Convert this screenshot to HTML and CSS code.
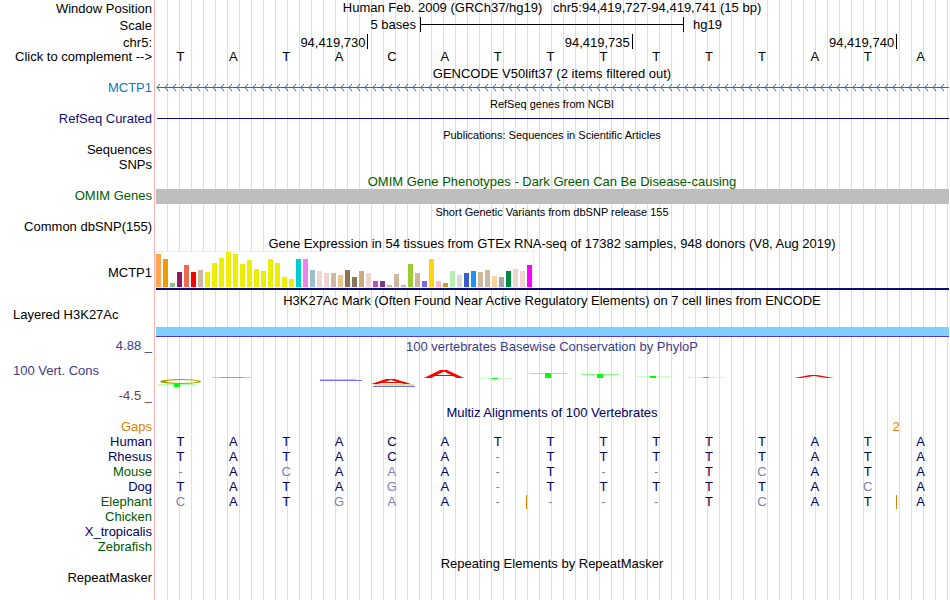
FILE: index.html
```
<!DOCTYPE html>
<html lang="en">
<head>
<meta charset="utf-8">
<title>Genome Browser</title>
<link rel="stylesheet" href="styles.css">
</head>
<body>
<main class="browser" id="browser">
  <section>
    <div class="row head"><div class="label">Window Position</div><div class="data title">Human Feb. 2009 (GRCh37/hg19) &nbsp; chr5:94,419,727-94,419,741 (15 bp)</div></div>
    <div class="row head"><div class="label">Scale</div><div class="data scale"><span class="from">5 bases</span><span class="ruler"></span><span class="to">hg19</span></div></div>
    <div class="row coords"><div class="label">chr5:</div><div class="data bases ticks"><span>94,419,730</span><span>94,419,735</span><span>94,419,740</span></div></div>
    <div class="row"><div class="label">Click to complement --&gt;</div><div class="data bases black" data-seq="TATACATTTTTTATA"></div></div>
  </section>
  <section>
    <h2>GENCODE V50lift37 (2 items filtered out)</h2>
    <div class="row"><div class="label sky">MCTP1</div><div class="data"><svg class="gene" height="15"><defs><pattern id="arrows" x="1" width="8" height="15" patternUnits="userSpaceOnUse"><path d="M4 3L1 6.500L4 10" fill="none" stroke="#0c78b4"/></pattern></defs><rect x="2" y="6" width="100%" height="1" fill="#0c78b4"/><rect x="1" width="100%" height="15" fill="url(#arrows)"/></svg></div></div>
  </section>
  <section>
    <h2 class="small">RefSeq genes from NCBI</h2>
    <div class="row"><div class="label blue">RefSeq Curated</div><div class="data"><div class="transcript"></div></div></div>
  </section>
  <section>
    <h2 class="small">Publications: Sequences in Scientific Articles</h2>
    <div class="row"><div class="label">Sequences</div></div>
    <div class="row"><div class="label">SNPs</div></div>
  </section>
  <section>
    <h2 class="green">OMIM Gene Phenotypes - Dark Green Can Be Disease-causing</h2>
    <div class="row"><div class="label green">OMIM Genes</div><div class="data"><div class="omim"></div></div></div>
  </section>
  <section>
    <h2 class="small">Short Genetic Variants from dbSNP release 155</h2>
    <div class="row"><div class="label">Common dbSNP(155)</div></div>
  </section>
  <section>
    <h2>Gene Expression in 54 tissues from GTEx RNA-seq of 17382 samples, 948 donors (V8, Aug 2019)</h2>
    <div class="row expression"><div class="label">MCTP1</div><div class="data"><div class="chart" id="chart"></div></div></div>
  </section>
  <section>
    <h2 class="spaced">H3K27Ac Mark (Often Found Near Active Regulatory Elements) on 7 cell lines from ENCODE</h2>
    <div class="row h3k"><div class="label left">Layered H3K27Ac</div><div class="data"><div class="signal"></div></div></div>
  </section>
  <section class="row cons">
    <div class="label range"><span class="indigo">4.88 _</span><span class="indigo left">100 Vert. Cons</span><span class="maroon">-4.5 _</span></div>
    <div class="data"><h2 class="indigo inner">100 vertebrates Basewise Conservation by PhyloP</h2>
      <svg class="logo" viewBox="155 357 794 46" preserveAspectRatio="none">
        <path d="M160 381.500a20 2.500 0 1 0 41 0a20 2.500 0 1 0-41 0zM166 381.500a16 1.500 0 1 1 32 0a16 1.500 0 1 1-32 0z" fill="#a8a000" fill-rule="evenodd"/>
        <path d="M158 384.500h38" stroke="#b0ffb0"/><path d="M174 384h6v3h-6z" fill="#0f0"/>
        <path d="M212 377.500h39M702 377.500h4" stroke="#ffb0b0"/><path d="M220 377.500h23" stroke="#f08080"/>
        <path d="M320 379.500h36" stroke="#ffb0b0"/><path d="M320 380.500h42" stroke="#7070ff"/>
        <path d="M374 385h40" stroke="#e8e090" stroke-width="2"/><path d="M373 386.500h42" stroke="#7070ff"/>
        <path d="M371 384L386 379h9L411 384h-7L391 380L378 384zM380 382h22v1h-22z" fill="red"/>
        <path d="M424 378L440 370h7L464 378h-7L444 371.500L431 378zM434 375h20v1h-20z" fill="red"/>
        <path d="M477 378.500h36M635 376.500h37M687 377.500h38" stroke="#c8ffc8"/>
        <path d="M529 373.500h38M581 374.500h38" stroke="#80ff80"/>
        <path d="M492 378h6v1h-6zM545 373h6v5h-6zM597 374h6v4h-6zM650 376h6v2h-6zM703 377h6v1h-6z" fill="#0f0"/>
        <path d="M794 378L810 375h7L834 378h-7L814 376L801 378z" fill="red"/>
      </svg></div>
  </section>
  <section>
    <h2 class="navy">Multiz Alignments of 100 Vertebrates</h2>
    <div class="row"><div class="label orange">Gaps</div><div class="data bases gaps"><span class="orange">2</span></div></div>
    <div class="row"><div class="label navy">Human</div><div class="data bases" data-seq="TATACATTTTTTATA"></div></div>
    <div class="row"><div class="label navy">Rhesus</div><div class="data bases" data-seq="TATACA-TTTTTATA"></div></div>
    <div class="row"><div class="label green">Mouse</div><div class="data bases" data-seq="-AcAaA-T--TcATA"></div></div>
    <div class="row"><div class="label navy">Dog</div><div class="data bases" data-seq="TATAgA-TTTTTAcA"></div></div>
    <div class="row"><div class="label green">Elephant</div><div class="data bases" data-seq="cATgaA-|---TcAT|A"></div></div>
    <div class="row"><div class="label green">Chicken</div></div>
    <div class="row"><div class="label navy">X_tropicalis</div></div>
    <div class="row"><div class="label green">Zebrafish</div></div>
  </section>
  <section>
    <h2>Repeating Elements by RepeatMasker</h2>
    <div class="row"><div class="label">RepeatMasker</div></div>
  </section>
</main>
<script src="tracks.js"></script>
</body>
</html>
```
FILE: styles.css
```
* { box-sizing: border-box; }
body {
  margin: 0;
  background: #fff;
  color: #000;
  font: 13px/15px "Liberation Sans", Arial, sans-serif;
}
.browser {
  min-height: 100vh;
  overflow: hidden;
  padding-right: 1px;
  background:
    linear-gradient(#ffb4b4, #ffb4b4) 154px 0 / 1px 100% no-repeat,
    repeating-linear-gradient(90deg, #dcdcf8 0 1px, transparent 1px 12px) 167px 0 no-repeat;
}
.row { display: flex; height: 15px; line-height: 13px; }
.head { height: 17px; line-height: 17px; }
.coords { height: 16px; line-height: 17px; }
.label { flex: 0 0 155px; padding-right: 3px; text-align: right; white-space: nowrap; }
.label.left { text-align: left; padding-left: 13px; }
.data { flex: 1; min-width: 0; }
.title { text-align: center; line-height: 15px; }
h2 {
  height: 16px;
  margin: 0 0 0 155px;
  font-size: 13px;
  line-height: 18px;
  font-weight: normal;
  text-align: center;
  white-space: nowrap;
}
h2.small { font-size: 11px; line-height: 17px; }
h2.inner { margin: 1px 0 0; }
h2.spaced { margin-top: 2px; }

.sky { color: #0c78b4; }
.blue { color: #0c0c78; }
.navy { color: #000064; }
.green { color: #005a00; }
.indigo { color: #3c3c8c; }
.maroon { color: #783c3c; }
.orange { color: #e08200; }

.scale { display: grid; grid-template-columns: 265fr 264fr 265fr; line-height: 15px; }
.from { text-align: right; padding-right: 4px; }
.to { padding-left: 9px; }
.ruler {
  height: 15px;
  border: solid #000;
  border-width: 0 1px;
  background: linear-gradient(#000, #000) 0 7px / 100% 1px no-repeat;
}

.bases {
  display: grid;
  grid-template-columns: repeat(15, 1fr);
  margin: 0 2px 0 -1px;
  text-align: center;
  color: #000064;
}
.base { position: relative; }
.bases.black { color: #000; }
.miss { color: #8080b0; }
.insert {
  position: absolute;
  top: 0;
  right: -3px;
  width: 1px;
  height: 14px;
  background: #e08200;
}
.bases.ticks { grid-template-columns: 4fr 5fr 5fr 1fr; color: #000; }
.ticks span {
  height: 15px;
  margin-right: -3px;
  padding-right: 2px;
  border-right: 1px solid #000;
  text-align: right;
}
.gaps { grid-template-columns: 13fr 2fr; }
.gaps span { grid-column: 2; padding-left: 4px; }

.gene { display: block; width: 100%; }
.transcript { height: 1px; margin: 6px 0 0 2px; background: #0c0c78; }
.omim { height: 15px; margin-left: 1px; background: #bebebe; }

.expression { height: 39px; line-height: 43px; }
.expression .data { margin: 1px 0 0 1px; border-bottom: 2px solid #0c0c78; }
.chart {
  display: flex;
  align-items: flex-end;
  gap: 2px;
  width: max-content;
  height: 35px;
  padding-right: 1px;
  background: #fff;
  box-shadow: 0 0 0 1px #eee;
}
.bar { width: 5px; }

.h3k { height: 29px; }
.h3k .data { align-self: flex-end; }
.signal { height: 10px; margin-left: 1px; background: #80d0ff; border-bottom: 1px solid #5038c8; }

.cons { height: 67px; line-height: 15px; }
.range { display: flex; flex-direction: column; gap: 10px; padding-top: 1px; }
.range .left { text-align: left; padding-left: 13px; }
.logo { display: block; width: 100%; height: 46px; margin-top: 3px; }
```
FILE: tracks.js
```
const bars = [
  [33, "#ffa54f"], [28, "#ee9a00"], [4, "#8fbc8f"], [15, "#8b1c62"], [22, "#ee6a50"], [15, "#ff0000"],
  [17, "#cdb79e"], [15, "#eeee00"], [24, "#eeee00"], [29, "#eeee00"], [35, "#eeee00"], [33, "#eeee00"],
  [23, "#eeee00"], [27, "#eeee00"], [18, "#eeee00"], [16, "#eeee00"], [28, "#eeee00"], [24, "#eeee00"],
  [10, "#eeee00"], [8, "#eeee00"], [28, "#00cdcd"], [28, "#ee82ee"], [17, "#9ac0cd"], [16, "#eed5d2"],
  [14, "#eed5d2"], [14, "#cdb79e"], [12, "#eec591"], [17, "#8b7355"], [10, "#8b7355"], [16, "#cdaa7d"],
  [14, "#eed5d2"], [6, "#b452cd"], [6, "#7a378b"], [2, "#cdb79e"], [13, "#cdb79e"], [2, "#cdb79e"],
  [23, "#9acd32"], [14, "#cdb79e"], [6, "#7a67ee"], [28, "#ffd700"], [6, "#ffb6c1"], [4, "#cd9b1d"],
  [16, "#b4eeb4"], [12, "#d9d9d9"], [14, "#3a5fcd"], [16, "#1e90ff"], [15, "#cdb79e"], [17, "#cdb79e"],
  [11, "#ffd39b"], [10, "#a6a6a6"], [16, "#008b45"], [18, "#eed5d2"], [16, "#eed5d2"], [22, "#ff00ff"]
];
const chart = document.getElementById("chart");
for (const [height, color] of bars) {
  const bar = document.createElement("span");
  bar.className = "bar";
  bar.style.height = height + "px";
  bar.style.background = color;
  chart.append(bar);
}

// Lower case and "-" are mismatches; "|" marks an insert after the previous base.
for (const row of document.querySelectorAll("[data-seq]")) {
  for (const ch of row.dataset.seq) {
    const cell = document.createElement("span");
    if (ch === "|") {
      cell.className = "insert";
      row.lastElementChild.append(cell);
      continue;
    }
    cell.className = /[a-z-]/.test(ch) ? "base miss" : "base";
    cell.textContent = ch.toUpperCase();
    row.append(cell);
  }
}
```
